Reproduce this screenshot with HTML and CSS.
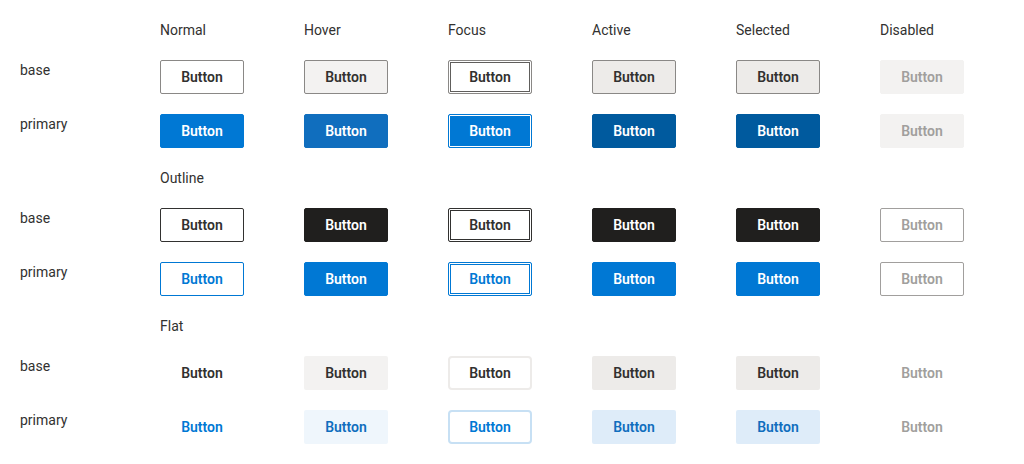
FILE: index.html
```html
<!DOCTYPE html>
<html>
<head>
<meta charset="utf-8">
<link rel="stylesheet" href="styles.css">
</head>
<body>
<div class="grid">
  <div></div>
  <div class="lbl">Normal</div><div class="lbl">Hover</div><div class="lbl">Focus</div><div class="lbl">Active</div><div class="lbl">Selected</div><div class="lbl">Disabled</div>

  <div class="lbl">base</div>
  <div><button class="btn std">Button</button></div>
  <div><button class="btn std hover">Button</button></div>
  <div><button class="btn std focus">Button</button></div>
  <div><button class="btn std active">Button</button></div>
  <div><button class="btn std active">Button</button></div>
  <div><button class="btn std disabled">Button</button></div>

  <div class="lbl">primary</div>
  <div><button class="btn pri">Button</button></div>
  <div><button class="btn pri hover">Button</button></div>
  <div><button class="btn pri focus">Button</button></div>
  <div><button class="btn pri active">Button</button></div>
  <div><button class="btn pri active">Button</button></div>
  <div><button class="btn pri disabled">Button</button></div>

  <div></div>
  <div class="lbl section">Outline</div>

  <div class="lbl">base</div>
  <div><button class="btn ol">Button</button></div>
  <div><button class="btn ol hover">Button</button></div>
  <div><button class="btn ol focus">Button</button></div>
  <div><button class="btn ol active">Button</button></div>
  <div><button class="btn ol active">Button</button></div>
  <div><button class="btn ol disabled">Button</button></div>

  <div class="lbl">primary</div>
  <div><button class="btn olp">Button</button></div>
  <div><button class="btn olp hover">Button</button></div>
  <div><button class="btn olp focus">Button</button></div>
  <div><button class="btn olp active">Button</button></div>
  <div><button class="btn olp active">Button</button></div>
  <div><button class="btn olp disabled">Button</button></div>

  <div></div>
  <div class="lbl section">Flat</div>

  <div class="lbl">base</div>
  <div><button class="btn fl">Button</button></div>
  <div><button class="btn fl hover">Button</button></div>
  <div><button class="btn fl focus">Button</button></div>
  <div><button class="btn fl active">Button</button></div>
  <div><button class="btn fl active">Button</button></div>
  <div><button class="btn fl disabled">Button</button></div>

  <div class="lbl">primary</div>
  <div><button class="btn flp">Button</button></div>
  <div><button class="btn flp hover">Button</button></div>
  <div><button class="btn flp focus">Button</button></div>
  <div><button class="btn flp active">Button</button></div>
  <div><button class="btn flp active">Button</button></div>
  <div><button class="btn flp disabled">Button</button></div>
</div>
</body>
</html>
```
FILE: styles.css
```css
html, body { margin: 0; background: #fff; }
body {
  font-family: Roboto, "Liberation Sans", sans-serif;
  color: #323130;
  font-size: 14px;
}
.grid {
  display: grid;
  grid-template-columns: 140px repeat(6, 144px);
  row-gap: 20px;
  padding: 20px 0 0 20px;
}
.lbl { line-height: 20px; }
.section { grid-column: 2 / span 6; }
.btn {
  display: block;
  width: 84px;
  height: 34px;
  box-sizing: border-box;
  margin: 0;
  padding: 0;
  border: 1px solid transparent;
  border-radius: 2px;
  background: #fff;
  font-family: Roboto, "Liberation Sans", sans-serif;
  font-size: 14px;
  font-weight: 600;
  color: #323130;
}
/* standard */
.std { border-color: #8a8886; }
.std.hover { background: #f3f2f1; }
.std.focus { box-shadow: inset 0 0 0 1px #fff, inset 0 0 0 2px #605e5c; }
.std.active { background: #edebe9; }
.std.disabled, .pri.disabled { background: #f3f2f1; border-color: #f3f2f1; color: #a19f9d; }
/* primary */
.pri { background: #0078d4; border-color: #0078d4; color: #fff; }
.pri.hover { background: #106ebe; border-color: #106ebe; }
.pri.focus { box-shadow: inset 0 0 0 1px #fff; }
.pri.active { background: #005a9e; border-color: #005a9e; }
/* outline */
.ol { border-color: #323130; }
.ol.hover, .ol.active { background: #201f1e; border-color: #201f1e; color: #fff; }
.ol.focus { box-shadow: inset 0 0 0 1px #fff, inset 0 0 0 2px #323130; }
.ol.disabled, .olp.disabled { border-color: #a19f9d; color: #a19f9d; background: #fff; }
.olp { border-color: #0078d4; color: #0078d4; }
.olp.hover, .olp.active { background: #0078d4; color: #fff; }
.olp.focus { box-shadow: inset 0 0 0 1px #fff, inset 0 0 0 2px #0078d4; }
/* flat */
.fl { background: transparent; }
.fl.hover { background: #f3f2f1; }
.fl.focus { border: 2px solid #edebe9; border-radius: 4px; }
.fl.active { background: #edebe9; }
.fl.disabled, .flp.disabled { color: #a19f9d; background: transparent; }
.flp { background: transparent; color: #0078d4; }
.flp.hover { background: #eff6fc; color: #106ebe; }
.flp.focus { border: 2px solid #c7e0f4; border-radius: 4px; }
.flp.active { background: #deecf9; color: #106ebe; }
```
